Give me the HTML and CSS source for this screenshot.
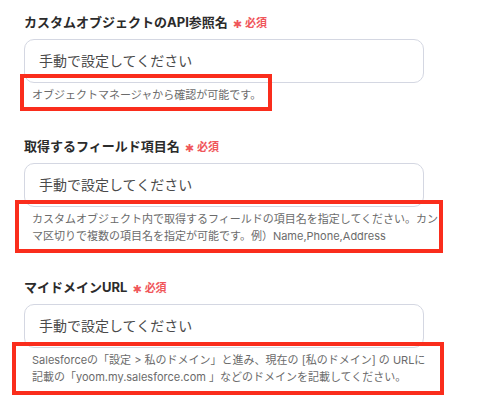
FILE: index.html
```html
<!DOCTYPE html>
<html lang="ja">
<head>
  <meta charset="UTF-8">
  <meta name="viewport" content="width=device-width, initial-scale=1.0">
  <title>Salesforce 設定</title>
  <link rel="stylesheet" href="styles.css">
</head>
<body>
  <div class="form">
    <div class="field">
      <div class="label">カスタムオブジェクトのAPI参照名<span class="req"><span class="star">✱</span>必須</span></div>
      <div class="input">手動で設定してください</div>
      <p class="hint hint-api">オブジェクトマネージャから確認が可能です。</p>
    </div>

    <div class="field">
      <div class="label">取得するフィールド項目名<span class="req"><span class="star">✱</span>必須</span></div>
      <div class="input">手動で設定してください</div>
      <p class="hint hint-fields">カスタムオブジェクト内で取得するフィールドの項目名を指定してください。カン<br>マ区切りで複数の項目名を指定が可能です。例）Name,Phone,Address</p>
    </div>

    <div class="field">
      <div class="label">マイドメインURL<span class="req"><span class="star">✱</span>必須</span></div>
      <div class="input">手動で設定してください</div>
      <p class="hint hint-domain">Salesforceの「設定 &gt; 私のドメイン」と進み、現在の [私のドメイン] の URLに<br>記載の「yoom.my.salesforce.com 」などのドメインを記載してください。</p>
    </div>
  </div>
</body>
</html>
```

FILE: styles.css
```css
/* Base */
body {
  margin: 0;
  background: #fff;
  color: #2b2b2b;
  font-family: Inter, "Noto Sans CJK JP", sans-serif;
}

.form {
  padding: 12px 0 0 24px;
}

.field {
  width: 400px;
  margin-bottom: 32px;
}

.label {
  height: 20px;
  font-size: 13px;
  font-weight: 700;
  line-height: 20px;
  margin-bottom: 7px;
}

.req {
  margin-left: 5px;
  color: #f0565a;
  font-size: 11px;
  font-weight: 600;
}

.star {
  display: inline-block;
  font-family: "DejaVu Sans", sans-serif;
  font-size: 11px;
  line-height: 0;
  margin-right: 3px;
  vertical-align: -1px;
}

.input {
  box-sizing: border-box;
  height: 44px;
  padding-left: 14px;
  border: 1px solid #d4d7e2;
  border-radius: 10px;
  font-size: 14px;
  line-height: 42px;
  color: #4a4a4a;
}

/* Helper text with red annotation frame */
.hint {
  position: relative;
  margin: 4px 0 0;
  padding-left: 8px;
  width: 420px;
  font-size: 11px;
  line-height: 17px;
  color: #6b6b6b;
  white-space: nowrap;
}

.hint::after {
  content: "";
  position: absolute;
  box-sizing: border-box;
  border: 4px solid #fa2d1c;
}

.hint-api::after {
  top: -13px;
  left: -4px;
  width: 252px;
  height: 37px;
}

.hint-fields::after {
  top: -11px;
  left: -9px;
  width: 428px;
  height: 53px;
}

.hint-domain::after {
  top: -10px;
  left: -12px;
  width: 432px;
  height: 53px;
}
```
